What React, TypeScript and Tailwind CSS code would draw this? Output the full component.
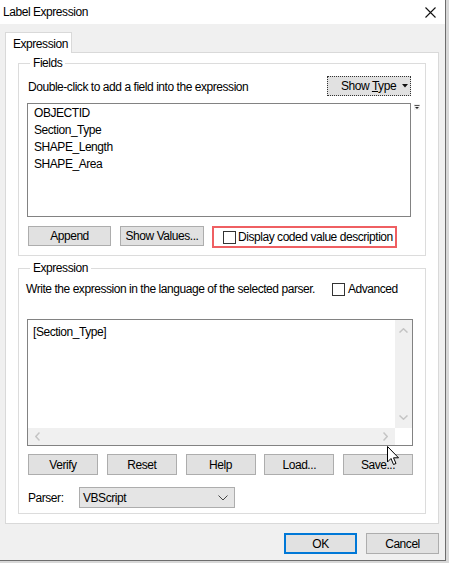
import type { ReactNode } from 'react'

// Segoe UI is not installed; Liberation Sans is wider, so tighten it a bit
const font = {
  fontFamily: '"Segoe UI", "Liberation Sans", Arial, sans-serif',
  letterSpacing: '-0.45px',
}

function Btn({ children, className = '' }: { children: ReactNode; className?: string }) {
  return (
    <div
      className={`flex items-center justify-center bg-[#e1e1e1] border border-[#adadad] text-[12px] text-black whitespace-nowrap ${className}`}
    >
      {children}
    </div>
  )
}

function Check() {
  return <div className="w-[13px] h-[13px] border border-[#333] bg-white shrink-0" />
}

function GroupLabel({ children }: { children: ReactNode }) {
  return (
    <div className="-mt-[8px] ml-[3px] w-fit bg-white px-[3px] h-[15px] leading-[15px] text-[12px]">
      {children}
    </div>
  )
}

export default function App() {
  const fields = ['OBJECTID', 'Section_Type', 'SHAPE_Length', 'SHAPE_Area']

  return (
    <div className="w-[449px] h-[563px] bg-[#d8d8d8] overflow-hidden text-black" style={font}>
      <div className="relative w-[446px] h-[561px] flex flex-col border-r border-b border-[#6d6d6d] bg-[#f0f0f0]">
        {/* title bar */}
        <div className="h-[24px] bg-white flex items-center justify-between pl-[3px] pr-[9px] shrink-0">
          <span className="text-[12px]">Label Expression</span>
          <svg width="11" height="11" viewBox="0 0 11 11">
            <path d="M0.5 0.5 L10.5 10.5 M10.5 0.5 L0.5 10.5" stroke="#111" strokeWidth="1.1" />
          </svg>
        </div>

        {/* body */}
        <div className="flex-1 flex flex-col pl-[5px] pt-[8px]">
          {/* tab header */}
          <div className="flex">
            <div className="w-[67px] h-[21px] bg-white border border-b-0 border-[#d9d9d9] text-[12px] pl-[7px] pt-[2px] -mb-px relative z-10">
              Expression
            </div>
          </div>

          {/* tab panel */}
          <div className="w-[434px] h-[472px] bg-white border border-[#d9d9d9] pl-[12px] pt-[10px]">
            {/* Fields group */}
            <div className="w-[408px] h-[193px] border border-[#dcdcdc] pl-[8px] flex flex-col">
              <GroupLabel>Fields</GroupLabel>
              <div className="mt-[5px] w-[384px] h-[20px] flex items-center justify-between">
                <span className="text-[12px] pl-[1px] pt-[2px] whitespace-nowrap">
                  Double-click to add a field into the expression
                </span>
                <div className="w-[84px] h-[20px] bg-[#e1e1e1] border border-dotted border-[#333] flex items-center justify-between pl-[13px] pr-[2px] text-[12px] whitespace-nowrap">
                  <span>
                    Show <span className="underline">T</span>ype
                  </span>
                  <svg className="shrink-0" width="6" height="4" viewBox="0 0 6 4">
                    <path d="M0 0 H6 L3 3.5 Z" fill="#111" />
                  </svg>
                </div>
              </div>
              <div className="mt-[7px] flex items-start gap-[3px]">
                <div className="w-[384px] h-[114px] border border-[#828282] bg-white pl-[6px] pt-[1px]">
                  {fields.map((f) => (
                    <div key={f} className="text-[12px] leading-[17px]">
                      {f}
                    </div>
                  ))}
                </div>
                <svg width="6" height="6" viewBox="0 0 6 6" className="mt-[1px]">
                  <rect x="0" y="0" width="6" height="6" fill="#f0f0f0" />
                  <path d="M0.5 1.5 H5.5" stroke="#555" strokeWidth="1" />
                  <path d="M1 3 H5 L3 5 Z" fill="#222" />
                </svg>
              </div>
              <div className="mt-[9px] flex items-start">
                <Btn className="w-[83px] h-[20px] ml-[1px]">Append</Btn>
                <Btn className="w-[84px] h-[20px] ml-[9px]">Show Values...</Btn>
                <div className="ml-[8px] w-[185px] h-[22px] border-2 border-[#ef5f62] flex items-center pl-[9px] gap-[2px]">
                  <Check />
                  <span className="text-[12px] whitespace-nowrap">Display coded value description</span>
                </div>
              </div>
            </div>

            {/* Expression group */}
            <div className="mt-[12px] w-[408px] h-[246px] border border-[#dcdcdc] pl-[8px] flex flex-col">
              <GroupLabel>Expression</GroupLabel>
              <div className="mt-[6px] h-[14px] flex items-center">
                <span className="text-[12px] whitespace-nowrap -ml-[1px] w-[306px]">
                  Write the expression in the language of the selected parser.
                </span>
                <div className="flex items-center gap-[3px]">
                  <Check />
                  <span className="text-[12px]">Advanced</span>
                </div>
              </div>
              <div className="mt-[23px] w-[386px] h-[127px] border border-[#828282] bg-white flex flex-col">
                <div className="flex flex-1">
                  <div className="flex-1 text-[12px] pl-[5px] pt-[3px]">[Section_Type]</div>
                  <div className="w-[17px] bg-[#f0f0f0] flex flex-col items-center justify-between py-[8px]">
                    <svg width="9" height="5" viewBox="0 0 9 5">
                      <path d="M0.5 4.5 L4.5 0.8 L8.5 4.5" stroke="#c4c4c4" strokeWidth="1.5" fill="none" />
                    </svg>
                    <svg width="9" height="5" viewBox="0 0 9 5">
                      <path d="M0.5 0.5 L4.5 4.2 L8.5 0.5" stroke="#c4c4c4" strokeWidth="1.5" fill="none" />
                    </svg>
                  </div>
                </div>
                <div className="h-[17px] flex shrink-0">
                  <div className="flex-1 bg-[#f0f0f0] flex items-center justify-between px-[7px]">
                    <svg width="5" height="9" viewBox="0 0 5 9">
                      <path d="M4.5 0.5 L0.8 4.5 L4.5 8.5" stroke="#c4c4c4" strokeWidth="1.5" fill="none" />
                    </svg>
                    <svg width="5" height="9" viewBox="0 0 5 9">
                      <path d="M0.5 0.5 L4.2 4.5 L0.5 8.5" stroke="#c4c4c4" strokeWidth="1.5" fill="none" />
                    </svg>
                  </div>
                  <div className="w-[17px] bg-white" />
                </div>
              </div>
              <div className="mt-[8px] w-[386px] pl-[1px] flex justify-between">
                <Btn className="w-[70px] h-[21px]">Verify</Btn>
                <Btn className="w-[70px] h-[21px]">Reset</Btn>
                <Btn className="w-[70px] h-[21px]">Help</Btn>
                <Btn className="w-[70px] h-[21px]">Load...</Btn>
                <Btn className="w-[70px] h-[21px]">Save...</Btn>
              </div>
              <div className="mt-[12px] flex items-center">
                <span className="text-[12px] w-[52px] pl-[1px]">Parser:</span>
                <div className="w-[156px] h-[21px] bg-[#e5e5e5] border border-[#adadad] flex items-center justify-between pl-[3px] pr-[6px] text-[12px]">
                  <span>VBScript</span>
                  <svg width="10" height="6" viewBox="0 0 10 6">
                    <path d="M0.5 0.5 L5 5 L9.5 0.5" stroke="#444" strokeWidth="1" fill="none" />
                  </svg>
                </div>
              </div>
            </div>
          </div>

          {/* OK / Cancel */}
          <div className="mt-[9px] flex justify-end pr-[6px] gap-[9px]">
            <div className="w-[73px] h-[21px] bg-[#e1e1e1] border-2 border-[#0078d7] flex items-center justify-center text-[12px]">
              OK
            </div>
            <Btn className="w-[73px] h-[21px]">Cancel</Btn>
          </div>
        </div>

        {/* mouse cursor */}
        <svg className="absolute left-[387px] top-[446px]" width="13" height="20" viewBox="0 0 13 20">
          <path
            d="M0.5 0.5 L0.5 16 L4 12.5 L6.5 18.5 L9 17.5 L6.5 11.8 L11.5 11.8 Z"
            fill="#fff"
            stroke="#000"
            strokeWidth="1"
            strokeLinejoin="round"
          />
        </svg>
      </div>
    </div>
  )
}
